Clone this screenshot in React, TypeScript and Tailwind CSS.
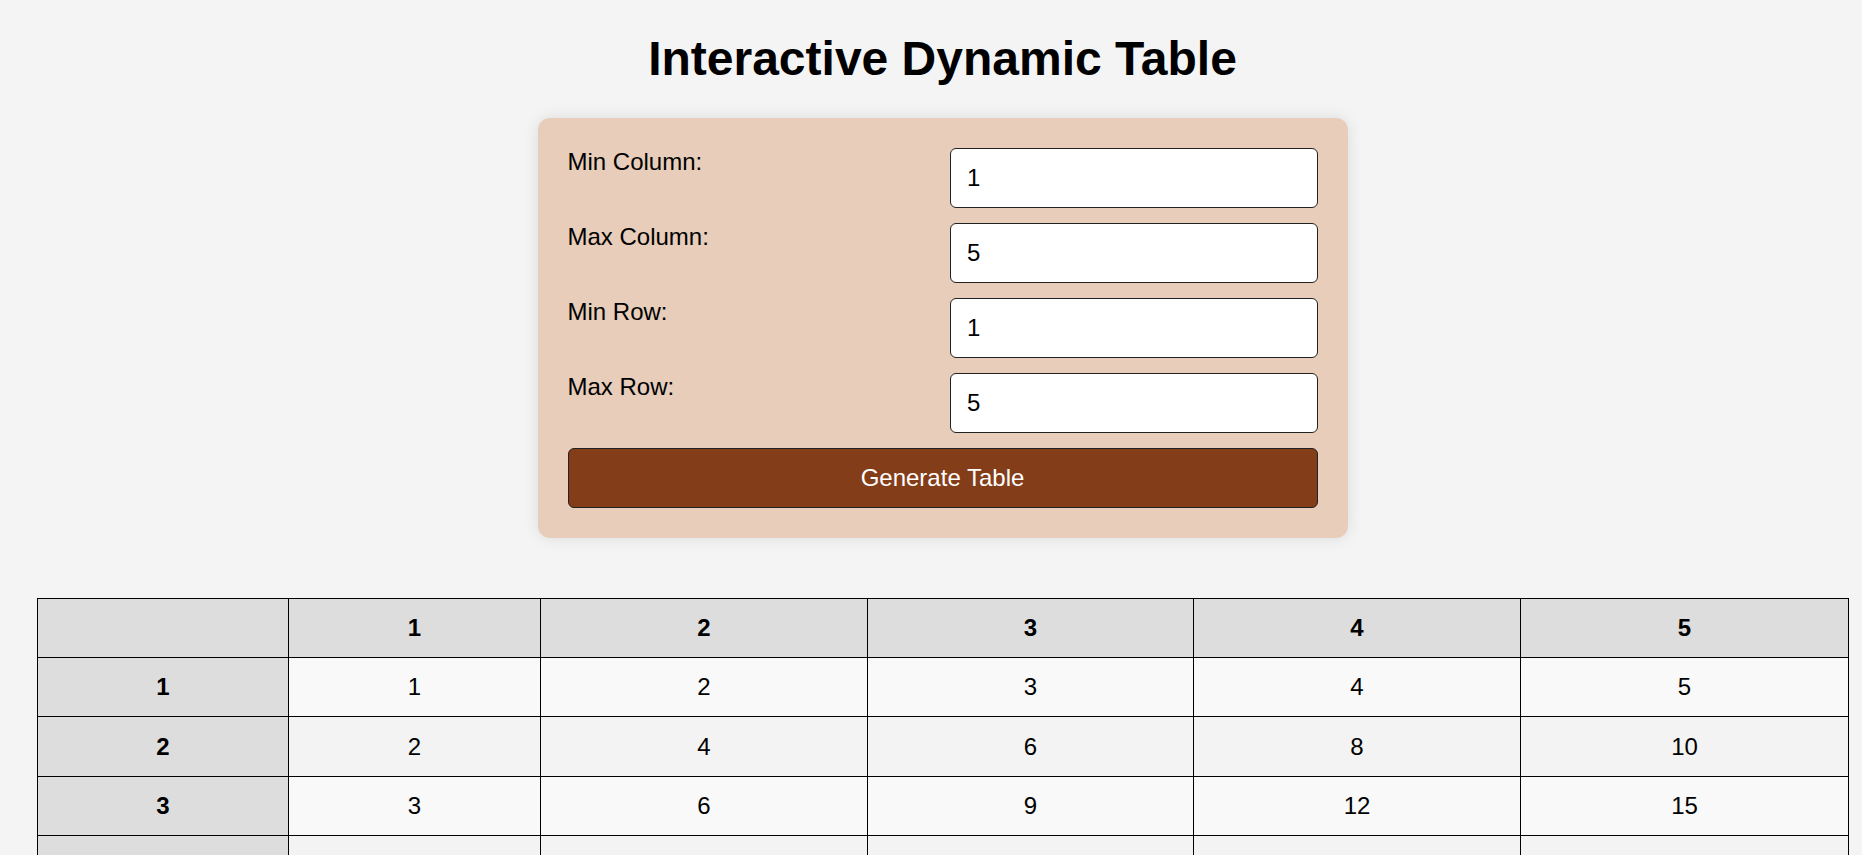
import React from "react";

const cols = [1, 2, 3, 4, 5];
const rows = [1, 2, 3, 4, 5];

function Field({ label, value }: { label: string; value: string }) {
  return (
    <>
      <label className="self-start text-[24px] leading-[27.6px]">{label}</label>
      <input
        readOnly
        value={value}
        className="h-[60px] w-full rounded-[6px] border border-[#222] bg-white pl-[16px] text-[24px] text-black outline-none"
        style={{ fontFamily: '"Liberation Sans", Arial, sans-serif' }}
      />
    </>
  );
}

export default function App() {
  return (
    <div
      className="min-h-screen bg-[#f4f4f4] pl-[37px] pr-[14px] text-black"
      style={{ fontFamily: '"Liberation Sans", Arial, sans-serif' }}
    >
      <h1 className="pt-[32px] text-center text-[48px] font-bold leading-[53.6px]">
        Interactive Dynamic Table
      </h1>
      <div className="mx-auto mt-[32px] w-[810px] rounded-[12px] bg-[#e7cdba] p-[30px] shadow-[0_0_15px_rgba(0,0,0,0.1)]">
        <div className="grid grid-cols-2 gap-x-[15px] gap-y-[15px]">
          <Field label="Min Column:" value="1" />
          <Field label="Max Column:" value="5" />
          <Field label="Min Row:" value="1" />
          <Field label="Max Row:" value="5" />
          <button className="col-span-2 h-[60px] rounded-[6px] border border-[#222] bg-[#843d19] text-[24px] text-white">
            Generate Table
          </button>
        </div>
      </div>
      <div className="mt-[60px] pb-[40px]">
        <table className="w-[1811px] table-fixed border-collapse text-[24px]">
          <colgroup>
            <col className="w-[251px]" />
            <col className="w-[252px]" />
            <col className="w-[327px]" />
            <col className="w-[326px]" />
            <col className="w-[327px]" />
            <col className="w-[328px]" />
          </colgroup>
          <thead>
            <tr>
              <th className="h-[59.4px] border border-black bg-[#dddddd]"></th>
              {cols.map((c) => (
                <th key={c} className="h-[59.4px] border border-black bg-[#dddddd] text-center font-bold">
                  {c}
                </th>
              ))}
            </tr>
          </thead>
          <tbody>
            {rows.map((r) => (
              <tr key={r} className={r % 2 === 0 ? "bg-[#f3f3f3]" : "bg-[#f9f9f9]"}>
                <th className="h-[59.4px] border border-black bg-[#dddddd] text-center font-bold">{r}</th>
                {cols.map((c) => (
                  <td key={c} className="h-[59.4px] border border-black text-center">
                    {r * c}
                  </td>
                ))}
              </tr>
            ))}
          </tbody>
        </table>
      </div>
    </div>
  );
}
